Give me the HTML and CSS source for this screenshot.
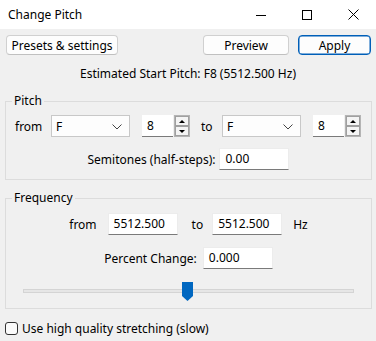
FILE: index.html
```html
<!DOCTYPE html>
<html lang="en">
<head>
    <meta charset="UTF-8">
    <title>Change Pitch</title>
    <link rel="stylesheet" href="styles.css">
</head>
<body>
    <div class="titlebar">
        <span class="title">Change Pitch</span>
        <div class="controls">
            <span class="ctl">
                <svg width="10" height="10" viewBox="0 0 10 10"><line x1="0" y1="5.5" x2="10" y2="5.5" stroke="#000" stroke-width="1"/></svg>
            </span>
            <span class="ctl">
                <svg width="10" height="10" viewBox="0 0 10 10"><rect x="0.5" y="0.5" width="9" height="9" fill="none" stroke="#000" stroke-width="1"/></svg>
            </span>
            <span class="ctl">
                <svg width="11" height="11" viewBox="0 0 11 11"><path d="M0.5 0.5 L10.5 10.5 M10.5 0.5 L0.5 10.5" stroke="#000" stroke-width="1"/></svg>
            </span>
        </div>
    </div>

    <div class="toolbar">
        <button class="btn presets">Presets &amp; settings</button>
        <div class="spacer"></div>
        <button class="btn preview">Preview</button>
        <button class="btn apply">Apply</button>
    </div>

    <div class="estimate">Estimated Start Pitch: F8 (5512.500 Hz)</div>

    <fieldset class="group pitch">
        <legend>Pitch</legend>
        <div class="row notes">
            <span class="lbl from-lbl">from</span>
            <div class="combo">F
                <svg class="chev" width="10" height="6" viewBox="0 0 10 6"><polyline points="0.5,0.5 5,5 9.5,0.5" fill="none" stroke="#444" stroke-width="1"/></svg>
            </div>
            <div class="spinner">
                <div class="spin-text">8</div>
                <div class="spin-btns">
                    <div class="spin-btn"><span class="up"></span></div>
                    <div class="spin-btn"><span class="down"></span></div>
                </div>
            </div>
            <span class="lbl to-lbl">to</span>
            <div class="combo">F
                <svg class="chev" width="10" height="6" viewBox="0 0 10 6"><polyline points="0.5,0.5 5,5 9.5,0.5" fill="none" stroke="#444" stroke-width="1"/></svg>
            </div>
            <div class="spinner">
                <div class="spin-text">8</div>
                <div class="spin-btns">
                    <div class="spin-btn"><span class="up"></span></div>
                    <div class="spin-btn"><span class="down"></span></div>
                </div>
            </div>
        </div>
        <div class="row centered semis">
            <span class="lbl">Semitones (half-steps):</span>
            <div class="textbox">0.00</div>
        </div>
    </fieldset>

    <fieldset class="group freq">
        <legend>Frequency</legend>
        <div class="row centered freq-row">
            <span class="lbl">from</span>
            <div class="textbox">5512.500</div>
            <span class="lbl">to</span>
            <div class="textbox">5512.500</div>
            <span class="lbl hz">Hz</span>
        </div>
        <div class="row centered percent">
            <span class="lbl">Percent Change:</span>
            <div class="textbox">0.000</div>
        </div>
        <div class="slider">
            <div class="track"></div>
            <svg class="thumb" width="11" height="19" viewBox="0 0 11 19"><path d="M0 0 H11 V14 L5.5 19 L0 14 Z" fill="#0067c0"/></svg>
        </div>
    </fieldset>

    <label class="check">
        <span class="box"></span>
        Use high quality stretching (slow)
    </label>
</body>
</html>
```

FILE: styles.css
```css
/* base */
body {
    margin: 0;
    width: 376px;
    height: 341px;
    overflow: hidden;
    background-color: #f0f0f0;
    font-family: 'Noto Sans', 'Open Sans', sans-serif;
    font-size: 12px;
    color: #000;
}

/* window title bar */
.titlebar {
    height: 29px;
    background-color: #fff;
    display: flex;
    align-items: center;
}

.title {
    padding-left: 8px;
    flex: 1;
}

.controls {
    display: flex;
    height: 100%;
}

.ctl {
    width: 46px;
    display: flex;
    align-items: center;
    justify-content: center;
}

/* top buttons */
.toolbar {
    display: flex;
    padding: 6px 5px 0 6px;
    gap: 9px;
}

.spacer {
    flex: 1;
}

.btn {
    height: 20px;
    padding: 0;
    font: inherit;
    background-color: #fdfdfd;
    border: 1px solid #d0d0d0;
    border-bottom-color: #c0c0c0;
    border-radius: 4px;
    color: #000;
}

.presets { width: 112px; }
.preview { width: 86px; }

.apply {
    width: 73px;
    border-color: #005fb8;
    box-shadow: inset 0 0 0 0.5px #005fb8;
}

.estimate {
    text-align: center;
    margin-top: 11px;
    line-height: 16px;
}

/* group boxes */
.group {
    margin: 11px 4px 0 5px;
    padding: 0 0 9px 0;
    border: 1px solid #dcdcdc;
    min-width: 0;
}

.group legend {
    margin-left: 6px;
    padding: 0 2px;
    line-height: 16px;
}

.freq {
    margin-top: 10px;
    padding-bottom: 8px;
}

.row {
    display: flex;
    align-items: center;
}

.centered {
    justify-content: center;
}

.notes {
    margin-top: 6px;
    padding-left: 9px;
}

.from-lbl { width: 36px; }

.to-lbl {
    width: 21px;
    margin-left: 11px;
}

.combo {
    width: 79px;
    height: 22px;
    box-sizing: border-box;
    border: 1px solid #c8c8c8;
    background-color: #fdfdfd;
    display: flex;
    align-items: center;
    padding-left: 4px;
    position: relative;
}

.chev {
    position: absolute;
    right: 7px;
    top: 8px;
}

.spinner {
    display: flex;
    margin-left: 12px;
}

.spin-text {
    width: 31px;
    height: 22px;
    box-sizing: border-box;
    background-color: #fff;
    border-bottom: 1px solid #7a7a7a;
    padding-left: 5px;
    line-height: 21px;
}

.spin-btns {
    width: 16px;
    height: 22px;
    box-sizing: border-box;
    border: 1px solid #b4b4b4;
    display: flex;
    flex-direction: column;
    margin-left: 1px;
}

.spin-btn {
    flex: 1;
    border: 1px solid #a0a0a0;
    background-color: #f4f4f4;
    display: flex;
    align-items: center;
    justify-content: center;
}

.up, .down {
    width: 0;
    height: 0;
    border-left: 3px solid transparent;
    border-right: 3px solid transparent;
}

.up { border-bottom: 3px solid #000; }
.down { border-top: 3px solid #000; }

.semis {
    margin-top: 11px;
    gap: 4px;
}

.textbox {
    width: 70px;
    height: 22px;
    box-sizing: border-box;
    background-color: #fff;
    border: 1px solid #ececec;
    border-bottom-color: #7a7a7a;
    padding-left: 5px;
    line-height: 20px;
}

/* frequency group */
.freq-row {
    margin-top: 7px;
    gap: 0;
}

.freq-row .lbl:first-child { margin-right: 11px; }
.freq-row .lbl:nth-child(3) { margin: 0 9px 0 14px; }
.freq-row .hz { margin-left: 11px; }

.percent {
    margin-top: 12px;
    gap: 6px;
}

.slider {
    position: relative;
    height: 31px;
    margin: 0 17px 0 17px;
}

.track {
    position: absolute;
    left: 0;
    right: 0;
    top: 20px;
    height: 4px;
    box-sizing: border-box;
    background-color: #e6e6e6;
    border: 1px solid #d4d4d4;
}

.thumb {
    position: absolute;
    left: 159px;
    top: 13px;
}

/* checkbox */
.check {
    display: flex;
    align-items: center;
    gap: 4px;
    margin: 11px 0 0 5px;
}

.box {
    width: 13px;
    height: 13px;
    box-sizing: border-box;
    border: 1px solid #333;
    border-radius: 3px;
    background-color: #fbfbfb;
}
```
